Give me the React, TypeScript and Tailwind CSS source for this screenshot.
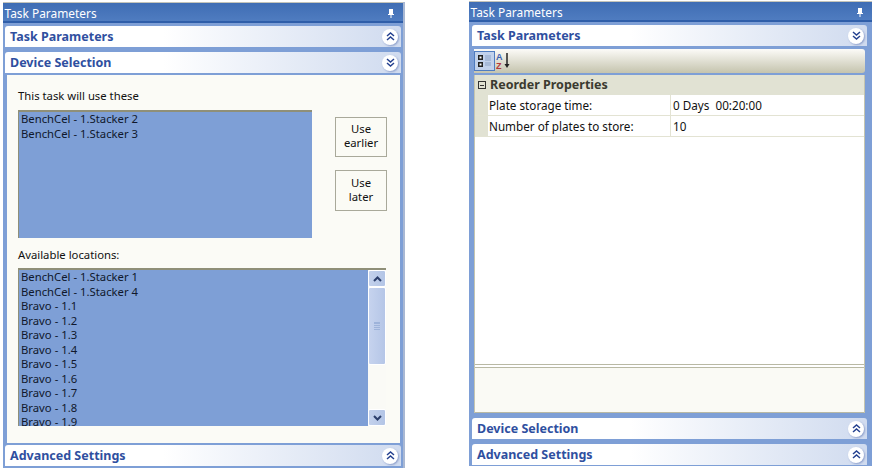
import * as React from "react";

const font = "font-['Noto_Sans','Liberation_Sans',sans-serif]";

const selectedItems = ["BenchCel - 1.Stacker 2", "BenchCel - 1.Stacker 3"];
const availableItems = [
	"BenchCel - 1.Stacker 1",
	"BenchCel - 1.Stacker 4",
	"Bravo - 1.1",
	"Bravo - 1.2",
	"Bravo - 1.3",
	"Bravo - 1.4",
	"Bravo - 1.5",
	"Bravo - 1.6",
	"Bravo - 1.7",
	"Bravo - 1.8",
	"Bravo - 1.9",
];

function Chevrons({ down }: { down?: boolean }) {
	return (
		<span className="flex h-[16px] w-[16px] items-center justify-center rounded-full bg-white shadow-[1px_1px_2px_#8d9fcb]">
			<svg width="9" height="9" viewBox="0 0 9 9" fill="none" stroke="#24408f" strokeWidth="1.5">
				{down ? (
					<path d="M1 1l3.5 3L8 1M1 5l3.5 3L8 5" />
				) : (
					<path d="M1 4l3.5-3L8 4M1 8l3.5-3L8 8" />
				)}
			</svg>
		</span>
	);
}

function SectionHeader({ title, down }: { title: string; down?: boolean }) {
	return (
		<div className="flex h-[21px] items-center justify-between rounded-t-[3px] bg-gradient-to-r from-white from-40% to-[#d0dbef] pl-[5px] pr-[3px]">
			<span className="pt-[2px] text-[12.5px] font-bold text-[#2f4f9f]">{title}</span>
			<Chevrons down={down} />
		</div>
	);
}

function TitleBar() {
	return (
		<div className="flex h-[21px] shrink-0 items-center justify-between border-t border-[#c4c4ba] border-b-2 border-b-[#2f5ea9] bg-gradient-to-b from-[#3f6db4] to-[#4f7cc0] pl-[1.5px] pr-[8px] pt-[2px]">
			<span className="pt-[2px] text-[11.9px] text-white">Task Parameters</span>
			<svg width="8" height="9" viewBox="0 0 8 9" fill="white">
				<path d="M2 0h4v5h1v1H4.5v3h-1V6H1V5h1z" />
			</svg>
		</div>
	);
}

function ListRows({ items }: { items: string[] }) {
	return (
		<div className="flex flex-col">
			{items.map((item) => (
				<div key={item} className="h-[14.5px] text-[11.3px] leading-[14.5px] text-[#10182c]">
					{item}
				</div>
			))}
		</div>
	);
}

function SideButton({ label, tall }: { label: React.ReactNode; tall?: boolean }) {
	return (
		<div
			className={`flex w-[52px] items-center justify-center border border-[#a9a99a] bg-[#fbfbf5] text-center text-[11.3px] leading-[14px] text-[#111] ${
				tall ? "h-[41px]" : "h-[40px]"
			}`}
		>
			<span className="block pb-[2px]">{label}</span>
		</div>
	);
}

function Scrollbar() {
	const btn =
		"flex h-[17px] items-center justify-center rounded-[2px] border border-white bg-gradient-to-r from-[#c3d1ec] to-[#b3c5e6]";
	return (
		<div className="flex w-[18px] shrink-0 flex-col justify-between bg-[#fafaf6]">
			<div className="flex flex-col">
				<div className={btn}>
					<svg width="9" height="6" viewBox="0 0 9 6" fill="none" stroke="#2c3f6c" strokeWidth="2">
						<path d="M1 5l3.5-3.5L8 5" />
					</svg>
				</div>
				<div className="flex h-[78px] items-center justify-center rounded-[2px] border border-white bg-gradient-to-r from-[#c6d3ee] to-[#b5c6e7]">
					<div className="h-[8px] w-[6px] border-y border-[#9eb3da] bg-[repeating-linear-gradient(#9eb3da_0_1px,transparent_1px_2px)]" />
				</div>
			</div>
			<div className={btn}>
				<svg width="9" height="6" viewBox="0 0 9 6" fill="none" stroke="#2c3f6c" strokeWidth="2">
					<path d="M1 1l3.5 3.5L8 1" />
				</svg>
			</div>
		</div>
	);
}

function DeviceSelection() {
	return (
		<div className="ml-[2px] mr-[1px] mt-[2px] flex h-[368px] flex-col bg-[#fbfbf6] pl-[11px] pr-[13px] pt-[14px]">
			<div className="h-[21px] text-[11.3px] leading-[13px] text-[#111]">This task will use these</div>
			<div className="flex justify-between">
				<div className="h-[128px] w-[294px] border-t-2 border-l border-[#8f8f78] bg-[#7e9fd6] pl-[2px]">
					<ListRows items={selectedItems} />
				</div>
				<div className="flex flex-col gap-[13px] pt-[7px]">
					<SideButton label={<>Use<br />earlier</>} />
					<SideButton label={<>Use<br />later</>} tall />
				</div>
			</div>
			<div className="mt-[10px] h-[20px] text-[11.3px] leading-[13px] text-[#111]">Available locations:</div>
			<div className="mr-[1px] flex h-[158px] overflow-hidden border-t-2 border-l border-[#8f8f78]">
				<div className="flex-1 overflow-hidden bg-[#7e9fd6] pl-[2px]">
					<ListRows items={availableItems} />
				</div>
				<Scrollbar />
			</div>
		</div>
	);
}

function ToolbarIcons() {
	return (
		<div className="flex h-[24px] items-center rounded-r-[3px] bg-gradient-to-b from-[#fcfbf8] to-[#c5c4ae]">
			<div className="flex h-[20px] w-[21px] items-center justify-center border border-[#4f7cc0] bg-[#c2d2ec]">
				<svg width="14" height="14" viewBox="0 0 14 14">
					<rect x="0" y="1" width="5" height="5" fill="#222" />
					<rect x="1.5" y="2.5" width="2" height="2" fill="#fff" />
					<rect x="0" y="8" width="5" height="5" fill="#222" />
					<rect x="1.5" y="9.5" width="2" height="2" fill="#fff" />
					<path d="M7 2h6M7 4h6M7 6h6M7 9h6M7 11h6" stroke="#8da3c6" strokeWidth="1" />
				</svg>
			</div>
			<svg width="17" height="18" viewBox="0 0 17 18" className="ml-[1px]">
				<text x="0" y="8" fontSize="9" fontWeight="700" fill="#3a62b4" fontFamily="Liberation Sans">A</text>
				<text x="0" y="17" fontSize="9" fontWeight="700" fill="#b5383c" fontFamily="Liberation Sans">Z</text>
				<path d="M11 1v13" stroke="#222" strokeWidth="1.5" />
				<path d="M8.5 12h5l-2.5 4z" fill="#222" />
			</svg>
		</div>
	);
}

function PropertyRow({ name, value }: { name: string; value: string }) {
	return (
		<div className="flex h-[21px] border-b border-[#e3e3d3] text-[11.7px] leading-[20px] text-[#111]">
			<div className="w-[13px] bg-[#e1e2d3]" />
			<div className="w-[183px] border-r border-[#e3e3d3] pl-[1px]">{name}</div>
			<div className="flex-1 whitespace-pre pl-[2px]">{value}</div>
		</div>
	);
}

function TaskParameters() {
	return (
		<div className="mx-[2px] mt-[3px] flex h-[364px] flex-col">
			<ToolbarIcons />
			<div className="mt-[2px] flex flex-1 flex-col border-x border-[#c5c5b0] bg-white">
				<div className="flex h-[20px] items-center gap-[4px] bg-[#e1e2d3] pl-[3px]">
					<span className="flex h-[8px] w-[8px] items-center justify-center border border-[#333]">
						<span className="h-px w-[4px] bg-[#333]" />
					</span>
					<span className="text-[12.5px] font-bold text-[#3b3b30]">Reorder Properties</span>
				</div>
				<PropertyRow name="Plate storage time:" value="0 Days  00:20:00" />
				<PropertyRow name="Number of plates to store:" value="10" />
				<div className="flex-1" />
				<div className="h-[4px] border-y border-[#b9b9a4] bg-white" />
				<div className="h-[45px] border-b border-[#b9b9a4] bg-[#fafaf5]" />
			</div>
		</div>
	);
}

export default function App() {
	return (
		<div className={`flex h-[469px] w-[872px] items-start justify-between overflow-hidden bg-white pl-[3px] ${font}`}>
			<div className="mt-[2px] flex h-[466px] w-[402px] flex-col border-r-2 border-[#a9b8d3] bg-[#7e9fd6]">
				<TitleBar />
				<div className="flex flex-1 flex-col px-[2px] pt-[3px]">
					<SectionHeader title="Task Parameters" />
					<div className="h-[5px]" />
					<SectionHeader title="Device Selection" down />
					<DeviceSelection />
					<div className="h-[2px]" />
					<SectionHeader title="Advanced Settings" />
				</div>
			</div>
			<div className="mt-[1px] flex h-[465px] w-[403px] flex-col bg-[#7e9fd6]">
				<TitleBar />
				<div className="flex flex-1 flex-col pl-[3px] pr-[5px] pt-[3px]">
					<SectionHeader title="Task Parameters" down />
					<TaskParameters />
					<div className="h-[5px]" />
					<SectionHeader title="Device Selection" />
					<div className="h-[5px]" />
					<SectionHeader title="Advanced Settings" />
				</div>
			</div>
		</div>
	);
}
